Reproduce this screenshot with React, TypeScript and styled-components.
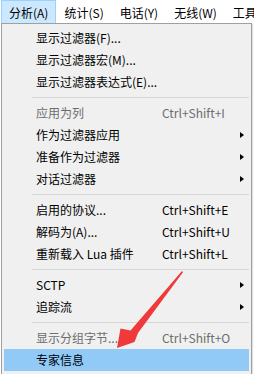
import React from "react";
import styled, { createGlobalStyle } from "styled-components";

const GlobalStyle = createGlobalStyle`
  html, body { margin: 0; padding: 0; background: #ffffff; }
  body { overflow: hidden; }
  * { box-sizing: border-box; }
`;

const Page = styled.div`
  position: relative;
  width: 254px;
  height: 374px;
  overflow: hidden;
  background: #ffffff;
  font-family: "Noto Sans CJK SC", "Noto Sans", sans-serif;
  font-size: 12px;
  color: #000;
`;

const MenuBar = styled.div`
  display: flex;
  height: 23px;
  padding-left: 1px;
  background: #ffffff;
  white-space: nowrap;
`;

const BarItem = styled.div<{ $active?: boolean }>`
  height: 23px;
  padding: 0 7px;
  line-height: 24px;
  border: 1px solid ${(p) => (p.$active ? "#99d1ff" : "transparent")};
  border-bottom: none;
  background: ${(p) => (p.$active ? "#cce8ff" : "transparent")};
`;

const Dropdown = styled.div`
  margin-left: 1px;
  width: 251px;
  border: 1px solid #a0a0a0;
  background: #f0f0f0;
  padding: 3px 2px;
  box-shadow: 1px 1px 1px rgba(0, 0, 0, 0.12);
`;

const Item = styled.div<{ $disabled?: boolean; $active?: boolean }>`
  display: grid;
  grid-template-columns: 32px 126px 74px 14px;
  align-items: center;
  height: 22px;
  line-height: 22px;
  white-space: nowrap;
  color: ${(p) => (p.$disabled ? "#6d6d6d" : "#000")};
  background: ${(p) => (p.$active ? "#91c9f7" : "transparent")};
`;

const Label = styled.span`
  grid-column: 2;
`;

const Shortcut = styled.span`
  grid-column: 3;
`;

const Arrow = styled.span`
  grid-column: 4;
  justify-self: start;
  margin-left: 4px;
  width: 0;
  height: 0;
  border-left: 4px solid #000;
  border-top: 3.5px solid transparent;
  border-bottom: 3.5px solid transparent;
`;

const Separator = styled.div`
  height: 9px;
  display: flex;
  align-items: center;
  padding-left: 28px;
  &::after {
    content: "";
    flex: 1;
    height: 1px;
    background: #d7d7d7;
  }
`;

const Annotation = styled.svg`
  position: absolute;
  left: 0;
  top: 0;
  pointer-events: none;
`;

type Entry =
  | { sep: true }
  | {
      sep?: false;
      label: string;
      shortcut?: string;
      sub?: boolean;
      disabled?: boolean;
      active?: boolean;
    };

const entries: Entry[] = [
  { label: "显示过滤器(F)..." },
  { label: "显示过滤器宏(M)..." },
  { label: "显示过滤器表达式(E)..." },
  { sep: true },
  { label: "应用为列", shortcut: "Ctrl+Shift+I", disabled: true },
  { label: "作为过滤器应用", sub: true },
  { label: "准备作为过滤器", sub: true },
  { label: "对话过滤器", sub: true },
  { sep: true },
  { label: "启用的协议...", shortcut: "Ctrl+Shift+E" },
  { label: "解码为(A)...", shortcut: "Ctrl+Shift+U" },
  { label: "重新载入 Lua 插件", shortcut: "Ctrl+Shift+L" },
  { sep: true },
  { label: "SCTP", sub: true },
  { label: "追踪流", sub: true },
  { sep: true },
  { label: "显示分组字节...", shortcut: "Ctrl+Shift+O", disabled: true },
  { label: "专家信息", active: true },
];

const barItems = ["分析(A)", "统计(S)", "电话(Y)", "无线(W)", "工具"];

export default function App() {
  return (
    <Page>
      <GlobalStyle />
      <MenuBar>
        {barItems.map((t, i) => (
          <BarItem key={t} $active={i === 0}>
            {t}
          </BarItem>
        ))}
      </MenuBar>
      <Dropdown>
        {entries.map((e, i) =>
          e.sep ? (
            <Separator key={i} />
          ) : (
            <Item key={i} $disabled={e.disabled} $active={e.active}>
              <Label>{e.label}</Label>
              {e.shortcut && <Shortcut>{e.shortcut}</Shortcut>}
              {e.sub && <Arrow />}
            </Item>
          )
        )}
      </Dropdown>
      <Annotation width="254" height="374" viewBox="0 0 254 374">
        <polygon
          points="182,271 183,272.2 138,333 134.5,342 117,348 120.5,328.5 130.5,330.5"
          fill="#ee3a3a"
        />
      </Annotation>
    </Page>
  );
}
